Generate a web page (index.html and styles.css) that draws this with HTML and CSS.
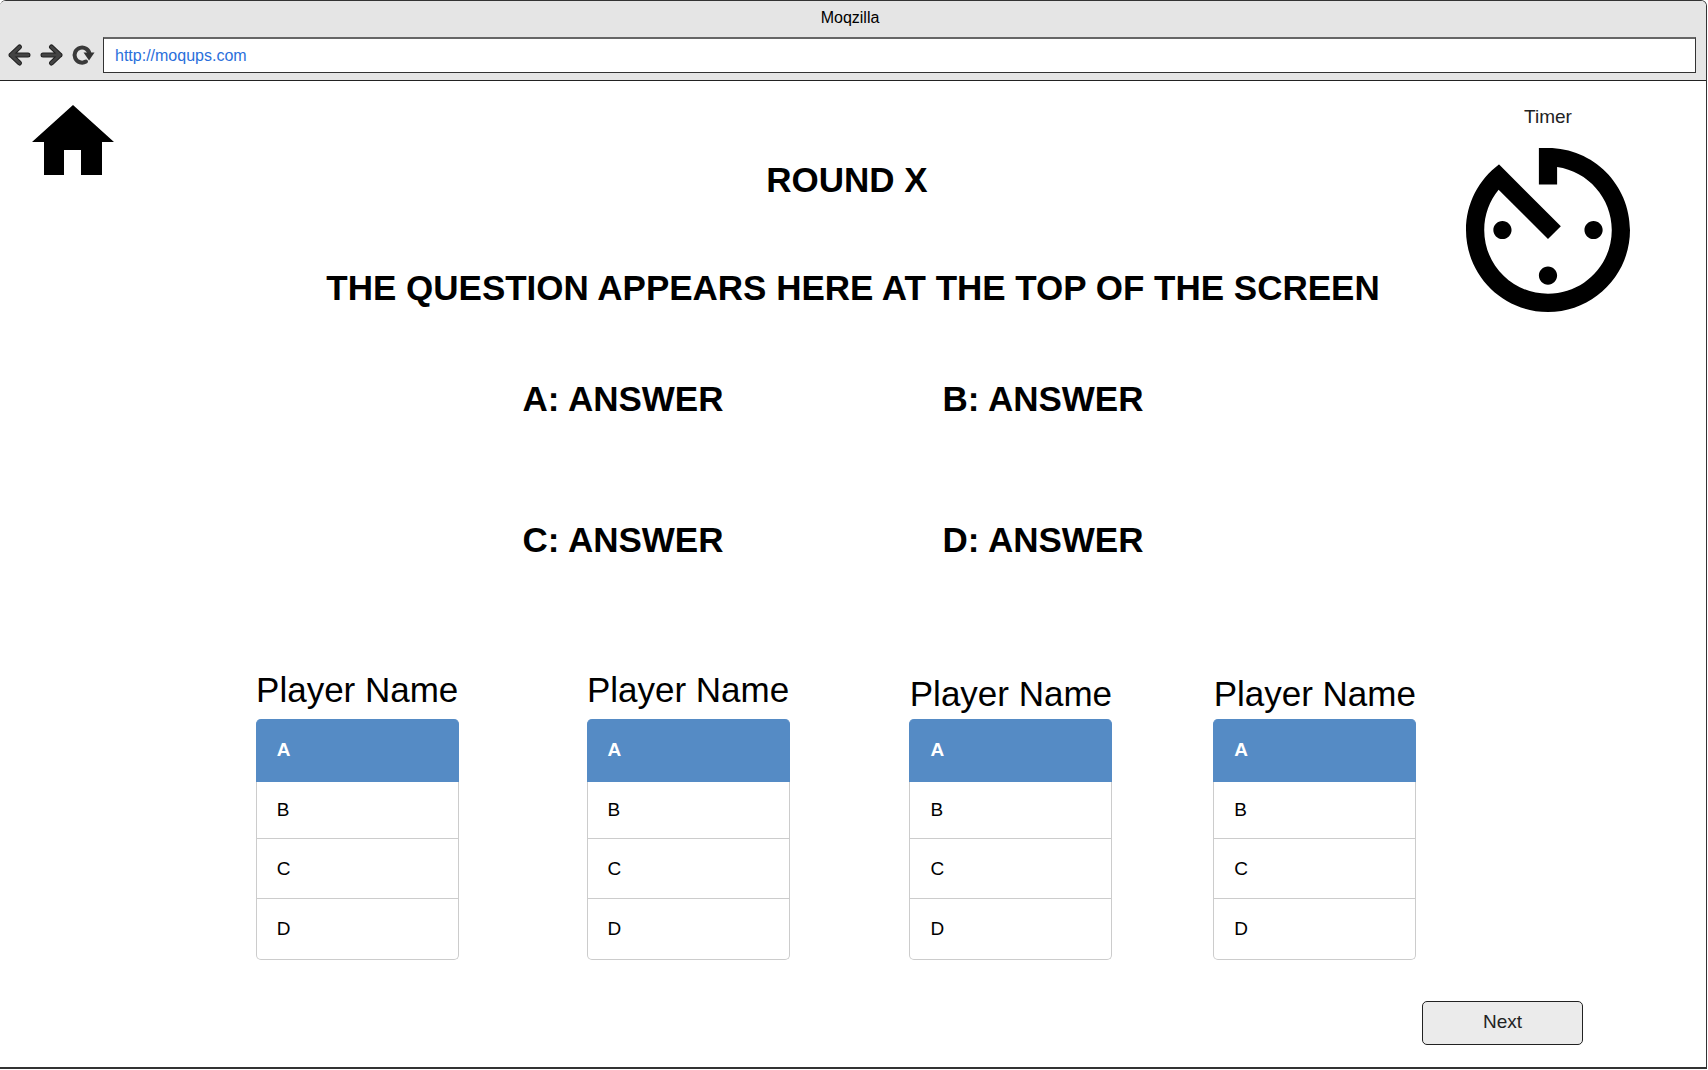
FILE: index.html
```html
<!DOCTYPE html>
<html lang="en">
<head>
<meta charset="utf-8">
<meta name="viewport" content="width=device-width, initial-scale=1">
<title>Moqzilla</title>
<link rel="stylesheet" href="styles.css">
</head>
<body>
<div class="window">
  <header class="chrome">
    <div class="chrome-title">Moqzilla</div>
    <div class="toolbar">
      <button class="tool" type="button" aria-label="Back">
        <svg width="24" height="24" viewBox="0 0 24 24"><path class="edge" d="M21 12H4M12.500 4L4 12l8.500 8"/><path class="core" d="M21 12H4M12.500 4L4 12l8.500 8"/></svg>
      </button>
      <button class="tool" type="button" aria-label="Forward">
        <svg width="24" height="24" viewBox="0 0 24 24"><path class="edge" d="M4 12H21M12.500 4L21 12l-8.500 8"/><path class="core" d="M4 12H21M12.500 4L21 12l-8.500 8"/></svg>
      </button>
      <button class="tool" type="button" aria-label="Reload">
        <svg width="24" height="24" viewBox="0 0 24 24"><path class="ring" d="M15 18.500A7.500 7.500 0 1 1 18.500 11"/><path class="tip" d="M12.500 9.500h11l-5.500 8z"/></svg>
      </button>
      <input class="address" type="text" aria-label="Address" value="http://moqups.com">
    </div>
  </header>

  <main class="page">
    <section class="stage">
      <a class="home" href="#" aria-label="Home">
        <svg width="82" height="70" viewBox="0 0 82 70"><path d="M41 0L82 37H70V70H49V45H32V70H12V37H0z"/></svg>
      </a>
      <div class="quiz">
        <h1 class="round">ROUND X</h1>
        <h2 class="question">THE QUESTION APPEARS HERE AT THE TOP OF THE SCREEN</h2>
        <ul class="answers">
          <li>A: ANSWER</li>
          <li>B: ANSWER</li>
          <li>C: ANSWER</li>
          <li>D: ANSWER</li>
        </ul>
      </div>
      <div class="timer">
        <span>Timer</span>
        <svg width="164" height="164" viewBox="3 3 18 18" aria-hidden="true"><path d="M11 17c0 .55.45 1 1 1s1-.45 1-1-.45-1-1-1-1 .45-1 1zm0-14v4h2V5.080c3.390.490 6 3.390 6 6.920 0 3.870-3.130 7-7 7s-7-3.130-7-7c0-1.680.590-3.220 1.580-4.420L12 13l1.410-1.410-6.800-6.800v.020C4.420 6.450 3 9.050 3 12c0 4.970 4.020 9 9 9 4.970 0 9-4.030 9-9s-4.030-9-9-9h-1zm7 9c0-.550-.450-1-1-1s-1 .450-1 1 .450 1 1 1 1-.450 1-1zM6 12c0 .550.450 1 1 1s1-.450 1-1-.450-1-1-1-1 .450-1 1z"/></svg>
      </div>
    </section>

    <section class="players">
      <table class="player raised">
        <caption>Player Name</caption>
        <thead><tr><th scope="col">A</th></tr></thead>
        <tbody><tr><td>B</td></tr><tr><td>C</td></tr><tr><td>D</td></tr></tbody>
      </table>
      <table class="player raised">
        <caption>Player Name</caption>
        <thead><tr><th scope="col">A</th></tr></thead>
        <tbody><tr><td>B</td></tr><tr><td>C</td></tr><tr><td>D</td></tr></tbody>
      </table>
      <table class="player">
        <caption>Player Name</caption>
        <thead><tr><th scope="col">A</th></tr></thead>
        <tbody><tr><td>B</td></tr><tr><td>C</td></tr><tr><td>D</td></tr></tbody>
      </table>
      <table class="player">
        <caption>Player Name</caption>
        <thead><tr><th scope="col">A</th></tr></thead>
        <tbody><tr><td>B</td></tr><tr><td>C</td></tr><tr><td>D</td></tr></tbody>
      </table>
    </section>

    <div class="actions">
      <button class="next" type="button">Next</button>
    </div>
  </main>
</div>
</body>
</html>
```
FILE: styles.css
```css
* {
  box-sizing: border-box;
}

body {
  margin: 0;
  background: #fff;
  color: #000;
  font-family: "Liberation Sans", Arial, Helvetica, sans-serif;
  font-size: 19px;
}

.window {
  display: flex;
  flex-direction: column;
  min-height: calc(100vh - 1px);
  margin-right: 1px;
  border: solid #333;
  border-width: 1px 1px 2px 0;
  border-radius: 6px 6px 0 0;
  overflow: hidden;
}

/* Browser bar */
.chrome {
  padding: 7px 10px 7px 7px;
  background: #e5e5e5;
  border-bottom: 1px solid #222;
}

.chrome-title {
  padding-right: 3px;
  font-size: 16px;
  line-height: 20px;
  text-align: center;
}

.toolbar {
  display: flex;
  align-items: center;
  gap: 8px;
  padding-top: 9px;
}

.tool {
  width: 24px;
  height: 24px;
  padding: 0;
  border: 0;
  background: none;
}

.tool svg {
  display: block;
}

.edge,
.core,
.ring {
  fill: none;
  stroke-linecap: round;
  stroke-linejoin: round;
}

.edge {
  stroke: #222;
  stroke-width: 5;
}

.core {
  stroke: #444;
  stroke-width: 3;
}

.ring {
  stroke: #3a3a3a;
  stroke-width: 4;
}

.tip {
  fill: #333;
}

.address {
  flex: 1;
  min-width: 0;
  height: 36px;
  padding: 0 11px;
  border: 1px solid #333;
  border-top: 2px solid #666;
  background: #fff;
  color: #2a6fdb;
  font: 16px "Liberation Sans", Arial, Helvetica, sans-serif;
}

/* Question area */
.stage {
  display: grid;
  grid-template-columns: 1fr auto 1fr;
  padding-top: 24px;
}

.home {
  justify-self: start;
  align-self: start;
  padding-left: 32px;
  color: #000;
}

.home svg,
.timer svg {
  display: block;
}

.quiz {
  padding-top: 55px;
}

.round,
.question,
.answers {
  margin: 0;
  font-size: 35px;
  font-weight: bold;
  line-height: 40px;
  text-align: center;
}

.round {
  padding-right: 12px;
}

.question {
  margin-top: 68px;
}

.answers {
  display: grid;
  grid-template-columns: 420px 420px;
  justify-content: center;
  row-gap: 101px;
  margin-top: 71px;
  padding: 0 40px 0 0;
  list-style: none;
}

.timer {
  display: flex;
  flex-direction: column;
  align-items: center;
  justify-self: end;
  gap: 19px;
  padding-right: 76px;
  color: #222;
  line-height: 24px;
}

.timer svg {
  fill: #000;
}

/* Players */
.players {
  display: grid;
  grid-template-columns: 256fr 203px 128fr 203px 120fr 203px 101fr 203px 290fr;
  align-items: end;
  margin-top: 110px;
}

.player {
  width: 100%;
  border-spacing: 0;
}

.player:nth-child(1) { grid-column: 2; }
.player:nth-child(2) { grid-column: 4; }
.player:nth-child(3) { grid-column: 6; }
.player:nth-child(4) { grid-column: 8; }

.player caption {
  padding-bottom: 5px;
  font-size: 35px;
  line-height: 40px;
  text-align: center;
  white-space: nowrap;
}

.player.raised caption {
  padding-bottom: 9px;
}

.player th,
.player td {
  height: 60px;
  padding: 0 20px;
  border: solid #ccc;
  border-width: 0 1px 1px;
  text-align: left;
}

.player th {
  height: 63px;
  border-color: #558bc5;
  border-radius: 5px 5px 0 0;
  background: #558bc5;
  color: #fff;
}

.player tbody tr:first-child td {
  height: 57px;
}

.player tbody tr:last-child td {
  height: 61px;
  border-radius: 0 0 5px 5px;
}

.actions {
  display: flex;
  justify-content: flex-end;
  padding: 41px 123px 20px;
}

.next {
  width: 161px;
  height: 44px;
  padding: 0 0 2px;
  border: 1px solid #222;
  border-radius: 5px;
  background: #ebebeb;
  color: #222;
  font: 19px "Liberation Sans", Arial, Helvetica, sans-serif;
}
```
